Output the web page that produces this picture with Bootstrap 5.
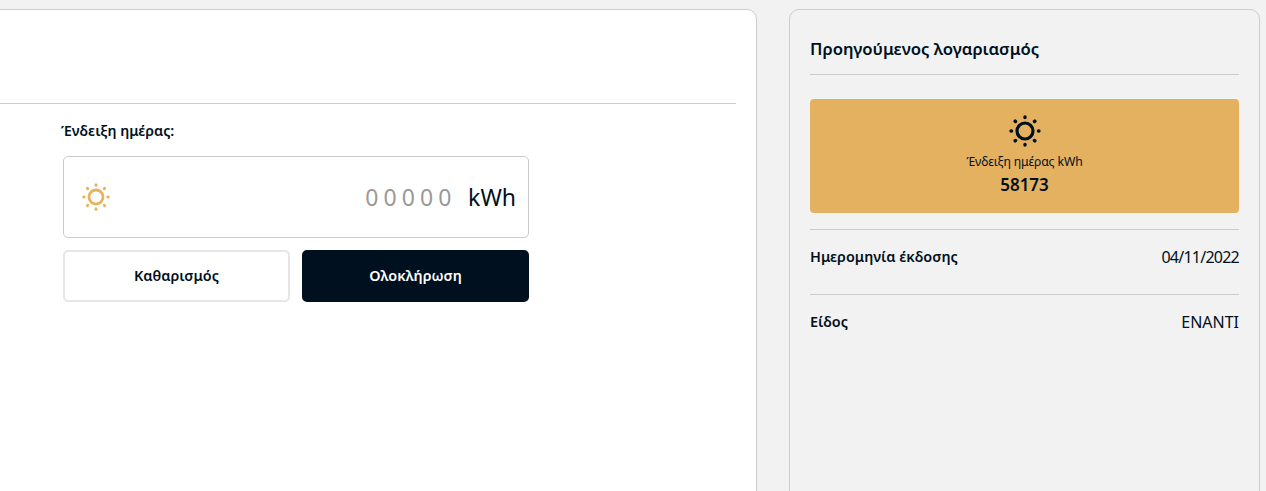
<!DOCTYPE html>
<html lang="el">
<head>
<meta charset="utf-8">
<title>Ένδειξη ημέρας</title>
<link href="https://cdn.jsdelivr.net/npm/bootstrap@5.3.0/dist/css/bootstrap.min.css" rel="stylesheet">
<style>
html,body{height:491px;overflow:hidden}
body{background:#f2f2f2;font-family:"Noto Sans",sans-serif;color:#001020}
.shell{width:1266px;height:491px;padding-top:9px;gap:32px;overflow:hidden}
.main-panel{width:777px;margin-left:-20px;height:520px;background:#fff;border:1px solid #ccc;border-radius:10px;flex:none}
.main-head{height:94px;margin-right:20px;border-bottom:1px solid #ccc}
.form-area{width:466px;margin-left:82px}
.field-label{font-size:14.3px;font-weight:600;line-height:19px;margin:17px 0 16px -2px}
.meter-box{height:82px;border:1px solid #ccc;border-radius:5px;padding:0 12px 0 18px;background:#fff}
.digits{font-size:23px;letter-spacing:5.1px;color:#999;margin-right:11.6px}
.unit{font-size:23px;color:#001020}
.btn-clear,.btn-done{width:227px;height:52px;font-size:14.4px;font-weight:600;border-radius:5px;padding:0;line-height:1}
.btn-clear{background:#fff;border:2px solid #e6e6e6;color:#001020}
.btn-done{background:#00101f;border:2px solid #00101f;color:#fff}
.btn-row{gap:12px;margin-top:12px}
.side-panel{width:471px;height:520px;flex:none;background:#f2f2f2;border:1px solid #ccc;border-radius:10px;padding:0 20px}
.side-title{font-size:16.7px;font-weight:600;height:65px;line-height:78px;border-bottom:1px solid #ccc}
.tile{height:114px;margin-top:24px;background:#e4b161;border-radius:4px;padding-top:16px}
.tile-label{font-size:12.2px;line-height:16px;margin-top:7px;letter-spacing:-.1px}
.tile-value{font-size:17px;font-weight:600;line-height:24px;margin-top:3px}
.info-row{height:65px;border-top:1px solid #ccc;padding-top:17px;line-height:20px}
.info-row.first-row{margin-top:16px}
.info-key{font-weight:600;font-size:14.4px}
.info-val{font-size:16px}
.info-date{letter-spacing:-.75px}
</style>
</head>
<body>
<div class="shell d-flex align-items-start">
  <div class="main-panel">
    <div class="main-head"></div>
    <div class="form-area">
      <div class="field-label">Ένδειξη ημέρας:</div>
      <div class="meter-box d-flex align-items-center">
        <svg width="28" height="28" viewBox="0 0 28 28" fill="none" stroke="#e8b35f" stroke-linecap="round" aria-hidden="true">
          <circle cx="14" cy="14" r="7" stroke-width="2.8"/>
          <path stroke-width="3" d="M14 1.8v.4M14 25.8v.4M1.8 14h.4M25.8 14h.4M5.4 5.4l.3.3M22.3 22.3l.3.3M22.6 5.4l-.3.3M5.7 22.3l-.3.3"/>
        </svg>
        <div class="ms-auto d-flex align-items-center"><span class="digits">00000</span><span class="unit">kWh</span></div>
      </div>
      <div class="btn-row d-flex">
        <button type="button" class="btn btn-clear">Καθαρισμός</button>
        <button type="button" class="btn btn-done">Ολοκλήρωση</button>
      </div>
    </div>
  </div>
  <div class="side-panel">
    <div class="side-title">Προηγούμενος λογαριασμός</div>
    <div class="tile d-flex flex-column align-items-center">
      <svg width="32" height="32" viewBox="0 0 28 28" fill="none" stroke="#00101f" stroke-linecap="round" aria-hidden="true">
        <circle cx="14" cy="14" r="7" stroke-width="2.8"/>
        <path stroke-width="3" d="M14 1.8v.4M14 25.8v.4M1.8 14h.4M25.8 14h.4M5.4 5.4l.3.3M22.3 22.3l.3.3M22.6 5.4l-.3.3M5.7 22.3l-.3.3"/>
      </svg>
      <div class="tile-label">Ένδειξη ημέρας kWh</div>
      <div class="tile-value">58173</div>
    </div>
    <div class="info-row first-row d-flex justify-content-between"><span class="info-key">Ημερομηνία έκδοσης</span><span class="info-val info-date">04/11/2022</span></div>
    <div class="info-row d-flex justify-content-between"><span class="info-key">Είδος</span><span class="info-val">ΕΝΑΝΤΙ</span></div>
  </div>
</div>
<script src="https://cdn.jsdelivr.net/npm/bootstrap@5.3.0/dist/js/bootstrap.bundle.min.js"></script>
</body>
</html>
